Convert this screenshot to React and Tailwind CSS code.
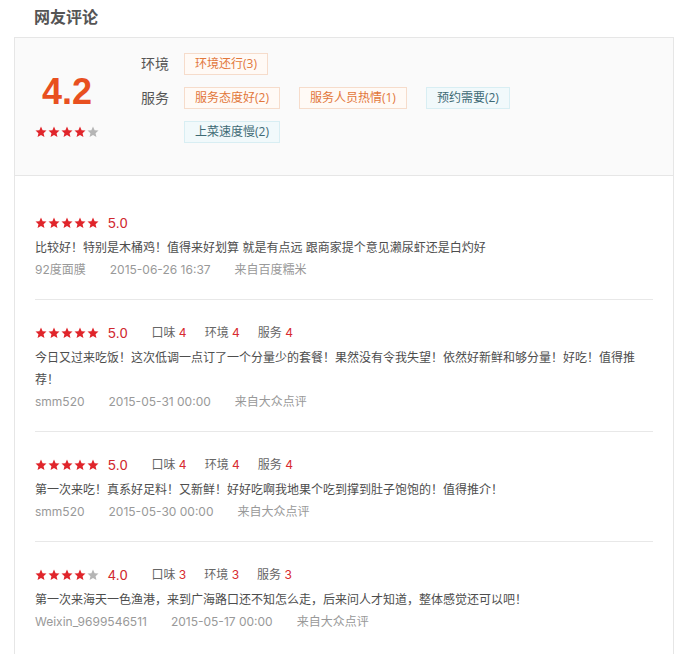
import React from "react";

const FONT = { fontFamily: 'Inter, "Noto Sans CJK SC", sans-serif' };

function Star({ filled }) {
  return (
    <svg width="12" height="12" viewBox="0 0 24 24" className="block">
      <polygon
        points="12,1 15.2,8.4 23,9.1 17.1,14.3 18.9,22.2 12,18.1 5.1,22.2 6.9,14.3 1,9.1 8.8,8.4"
        fill={filled ? "#e0252b" : "#b5b5b5"}
      />
    </svg>
  );
}

function Stars({ n }) {
  return (
    <div className="flex gap-[1px]">
      {[0, 1, 2, 3, 4].map((i) => (
        <Star key={i} filled={i < n} />
      ))}
    </div>
  );
}

function Tag({ children, kind }) {
  const cls =
    kind === "o"
      ? "border-[#f6dccb] bg-[#fffaf6] text-[#e2773a]"
      : "border-[#d8eef3] bg-[#f1f9fb] text-[#3e6a75]";
  return (
    <span
      className={`h-[22px] px-[10px] border text-[12px] leading-[20px] whitespace-nowrap ${cls}`}
      style={{ fontFamily: '"Open Sans", "Noto Sans CJK SC", sans-serif' }}
    >
      {children}
    </span>
  );
}

const reviews = [
  {
    stars: 5,
    score: "5.0",
    sub: null,
    text: "比较好！特别是木桶鸡！值得来好划算 就是有点远 跟商家提个意见濑尿虾还是白灼好",
    user: "92度面膜",
    date: "2015-06-26 16:37",
    src: "来自百度糯米",
  },
  {
    stars: 5,
    score: "5.0",
    sub: ["4", "4", "4"],
    text: "今日又过来吃饭！这次低调一点订了一个分量少的套餐！果然没有令我失望！依然好新鲜和够分量！好吃！值得推荐！",
    user: "smm520",
    date: "2015-05-31 00:00",
    src: "来自大众点评",
  },
  {
    stars: 5,
    score: "5.0",
    sub: ["4", "4", "4"],
    text: "第一次来吃！真系好足料！又新鲜！好好吃啊我地果个吃到撑到肚子饱饱的！值得推介！",
    user: "smm520",
    date: "2015-05-30 00:00",
    src: "来自大众点评",
  },
  {
    stars: 4,
    score: "4.0",
    sub: ["3", "3", "3"],
    text: "第一次来海天一色渔港，来到广海路口还不知怎么走，后来问人才知道，整体感觉还可以吧！",
    user: "Weixin_9699546511",
    date: "2015-05-17 00:00",
    src: "来自大众点评",
  },
];

function Review({ r, last }) {
  const labels = ["口味", "环境", "服务"];
  return (
    <div className={`pt-[23px] pb-[18px] ${last ? "" : "border-b border-[#e8e8e8]"}`}>
      <div className="h-[20px] flex items-center">
        <Stars n={r.stars} />
        <span
          className="ml-[9px] text-[14px] leading-[20px] text-[#d0282e]"
          style={{ fontFamily: '"Liberation Sans", sans-serif' }}
        >
          {r.score}
        </span>
        {r.sub &&
          r.sub.map((v, i) => (
            <span
              key={i}
              className={`${i === 0 ? "ml-[24px]" : "ml-[18px]"} text-[12px] leading-[20px] text-[#666]`}
            >
              {labels[i]} <span className="text-[#d82a30]">{v}</span>
            </span>
          ))}
      </div>
      <p className="mt-[4px] text-[12px] leading-[22px] text-[#4d4d4d] pr-[10px]">{r.text}</p>
      <div className="flex text-[12px] leading-[22px] text-[#999]">
        <span className="mr-[24px]">{r.user}</span>
        <span className="mr-[24px]">{r.date}</span>
        <span>{r.src}</span>
      </div>
    </div>
  );
}

export default function App() {
  return (
    <div className="w-[688px] h-[654px] bg-white overflow-hidden" style={FONT}>
      <div className="h-[37px] pl-[34px] pt-[7px]">
        <h2 className="text-[16px] leading-[20px] font-bold text-[#555]">网友评论</h2>
      </div>
      <div className="ml-[14px] w-[660px] border border-[#e6e6e6] h-[620px]">
        <div className="flex bg-[#fafafa] border-b border-[#e6e6e6] h-[138px]">
          <div className="w-[126px] pl-[20px] pt-[34px]">
            <div className="w-[64px] flex flex-col items-center">
              <div
                className="text-[36px] leading-[40px] font-bold text-[#e8501f]"
                style={{ fontFamily: '"Liberation Sans", sans-serif' }}
              >
                4.2
              </div>
              <div className="mt-[14px]">
                <Stars n={4} />
              </div>
            </div>
          </div>
          <div className="pt-[15px] flex flex-col gap-[12px]">
            <div className="flex">
              <span className="w-[43px] text-[14px] leading-[22px] text-[#555]">环境</span>
              <div className="flex">
                <Tag kind="o">环境还行(3)</Tag>
              </div>
            </div>
            <div className="flex">
              <span className="w-[43px] text-[14px] leading-[22px] text-[#555]">服务</span>
              <div className="w-[360px] flex flex-wrap gap-x-[19px] gap-y-[12px]">
                <Tag kind="o">服务态度好(2)</Tag>
                <Tag kind="o">服务人员热情(1)</Tag>
                <Tag kind="b">预约需要(2)</Tag>
                <Tag kind="b">上菜速度慢(2)</Tag>
              </div>
            </div>
          </div>
        </div>
        <div className="px-[20px] pt-[14px]">
          {reviews.map((r, i) => (
            <Review key={i} r={r} last={i === reviews.length - 1} />
          ))}
        </div>
      </div>
    </div>
  );
}
